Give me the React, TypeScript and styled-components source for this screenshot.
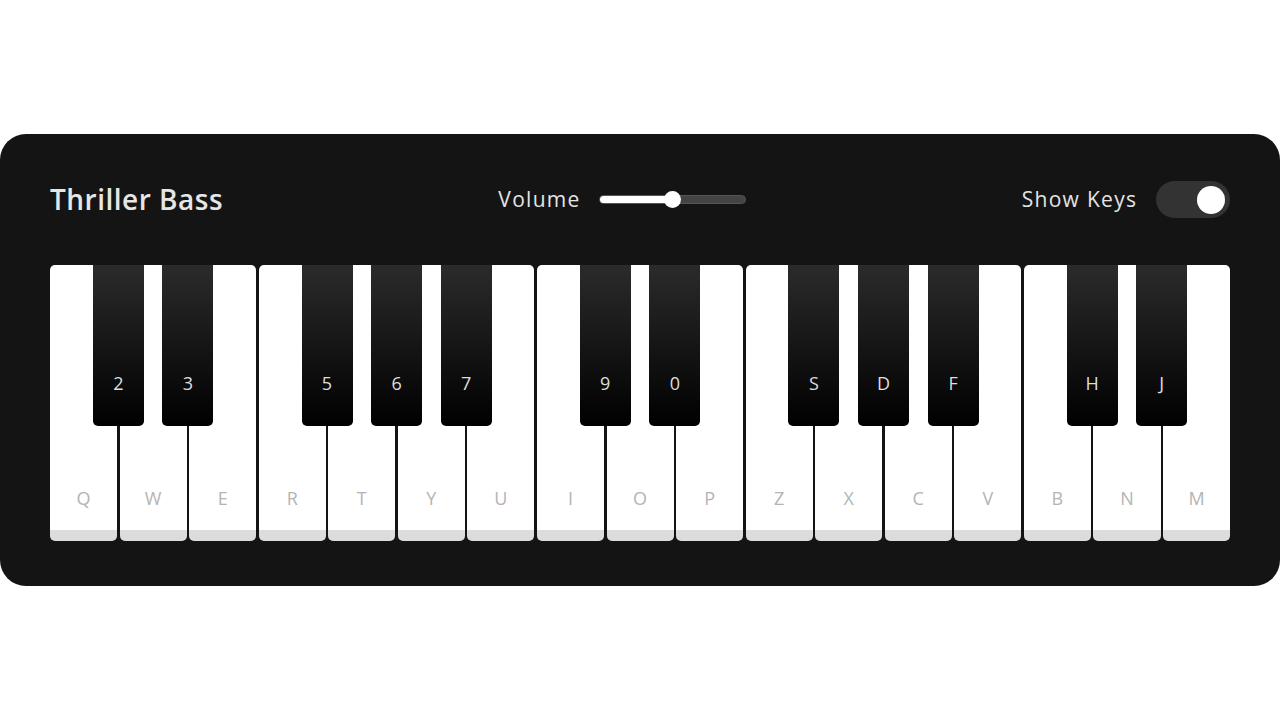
import React, { useState } from "react";
import styled, { createGlobalStyle } from "styled-components";

const Global = createGlobalStyle`
  * { box-sizing: border-box; }
  html, body { margin: 0; padding: 0; background: #ffffff; }
  body { font-family: "Open Sans", "Noto Sans", sans-serif; }
`;

const Page = styled.div`
  min-height: 720px;
  display: flex;
  align-items: center;
  justify-content: center;
`;

const Card = styled.div`
  width: 1280px;
  background: #141414;
  border-radius: 26px;
  padding: 47px 50px 45px;
  display: flex;
  flex-direction: column;
  gap: 47px;
`;

const Header = styled.header`
  display: flex;
  align-items: center;
  justify-content: space-between;
  height: 37px;
`;

const Title = styled.h2`
  margin: 0;
  font-family: "Open Sans", sans-serif;
  font-weight: 600;
  font-size: 28px;
  letter-spacing: 0.5px;
  color: #e6e6e6;
  position: relative;
  top: -1px;
`;

const Group = styled.div`
  display: flex;
  align-items: center;
  gap: 20px;
`;

const Label = styled.span`
  font-family: "Open Sans", sans-serif;
  font-size: 21px;
  letter-spacing: 1.3px;
  margin-right: -1.3px;
  color: #e4e4e4;
  position: relative;
  top: -1px;
`;

const Slider = styled.div`
  position: relative;
  width: 147px;
  height: 9px;
  border-radius: 5px;
  background: #444;
  border: 1px solid #555;
`;

const SliderFill = styled.div`
  height: 100%;
  border-radius: 5px;
  background: #fff;
`;

const Thumb = styled.div`
  position: absolute;
  top: 50%;
  width: 17px;
  height: 17px;
  margin-left: -8.5px;
  margin-top: -8.5px;
  border-radius: 50%;
  background: #fff;
`;

const Toggle = styled.div`
  width: 74px;
  height: 37px;
  border-radius: 19px;
  background: #333;
  display: flex;
  align-items: center;
  justify-content: ${(p: { $on: boolean }) => (p.$on ? "flex-end" : "flex-start")};
  padding: 0 5px;
  cursor: pointer;
`;

const Knob = styled.div`
  width: 28px;
  height: 28px;
  border-radius: 50%;
  background: #fff;
`;

const Keys = styled.ul`
  list-style: none;
  margin: 0;
  padding: 0;
  display: flex;
  gap: 2.5px;
  height: 276px;
`;

const WhiteKey = styled.li`
  position: relative;
  flex: 1;
  background: #fff;
  border-radius: 5px;
  border-bottom: 11px solid #dcdcdc;
  display: flex;
  align-items: flex-end;
  justify-content: center;
  padding-bottom: 20px;
`;

const WhiteLabel = styled.span`
  font-family: "Open Sans", sans-serif;
  font-size: 18px;
  color: #b4b4b4;
`;

const BlackKey = styled.span`
  position: absolute;
  top: 0;
  right: -26.75px;
  width: 51px;
  height: 161px;
  z-index: 2;
  border-radius: 0 0 5px 5px;
  background: linear-gradient(#2b2b2b, #000);
  display: flex;
  align-items: flex-end;
  justify-content: center;
  padding-bottom: 31px;
`;

const BlackLabel = styled.span`
  font-family: "Open Sans", sans-serif;
  font-size: 18px;
  color: #dedede;
`;

const whites = ["Q", "W", "E", "R", "T", "Y", "U", "I", "O", "P", "Z", "X", "C", "V", "B", "N", "M"];
const blacks: Record<string, string> = {
  Q: "2", W: "3", R: "5", T: "6", Y: "7", I: "9", O: "0", Z: "S", X: "D", C: "F", B: "H", N: "J",
};

export default function App() {
  const [show, setShow] = useState(true);
  const volume = 0.5;
  return (
    <Page>
      <Global />
      <Card>
        <Header>
          <Title>Thriller Bass</Title>
          <Group>
            <Label>Volume</Label>
            <Slider>
              <SliderFill style={{ width: `${volume * 100}%` }} />
              <Thumb style={{ left: `${volume * 100}%` }} />
            </Slider>
          </Group>
          <Group>
            <Label>Show Keys</Label>
            <Toggle $on={show} onClick={() => setShow(!show)}>
              <Knob />
            </Toggle>
          </Group>
        </Header>
        <Keys>
          {whites.map((k) => (
            <WhiteKey key={k}>
              {show && <WhiteLabel>{k}</WhiteLabel>}
              {blacks[k] && <BlackKey>{show && <BlackLabel>{blacks[k]}</BlackLabel>}</BlackKey>}
            </WhiteKey>
          ))}
        </Keys>
      </Card>
    </Page>
  );
}
